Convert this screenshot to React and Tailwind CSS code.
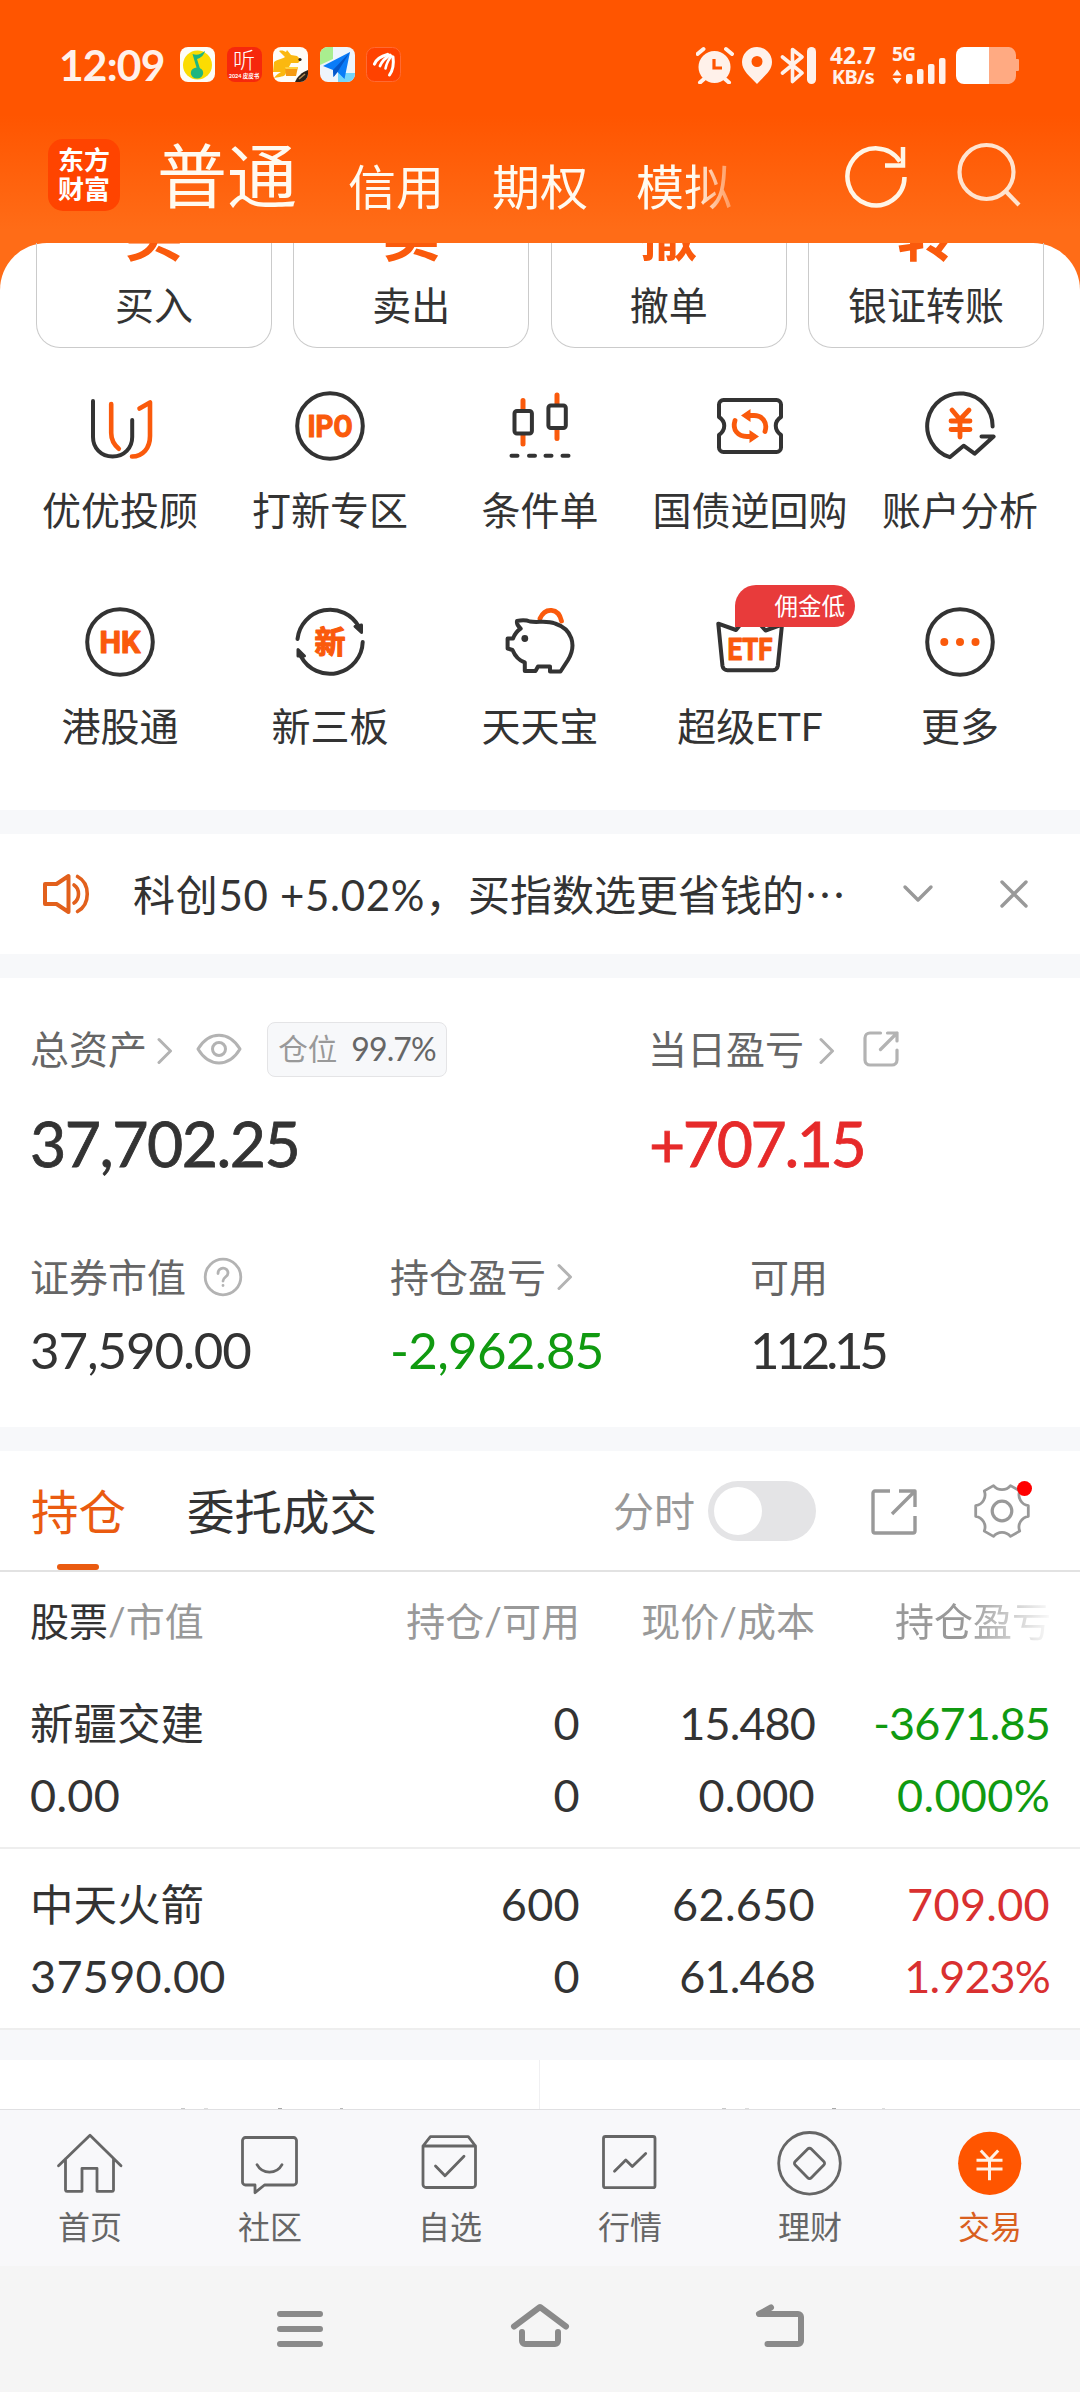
import clsx from 'clsx'

const DARK = '#333333'
const ORANGE = '#fa5a0c'
const FONT = "font-['Lato','Noto_Sans_CJK_SC',sans-serif]"

// ─── Shared bits ───

function Icon({ size = 72, stroke = DARK, width = 4, className, children }) {
  return (
    <svg
      width={size}
      height={size}
      viewBox={`0 0 ${size} ${size}`}
      fill="none"
      stroke={stroke}
      strokeWidth={width}
      strokeLinecap="round"
      strokeLinejoin="round"
      className={clsx('shrink-0', className)}
    >
      {children}
    </svg>
  )
}

function IconText({ x = 36, y = 47, length, size = 31, children }) {
  return (
    <text
      x={x}
      y={y}
      textAnchor="middle"
      textLength={length}
      lengthAdjust="spacingAndGlyphs"
      fontSize={size}
      fill={ORANGE}
      stroke={ORANGE}
      strokeWidth="1.200"
      className="font-['Roboto','Noto_Sans_CJK_SC',sans-serif] font-bold"
    >
      {children}
    </text>
  )
}

function Chevron({ className }) {
  return (
    <svg width="16" height="28" viewBox="0 0 16 28" fill="none" stroke="#b3b3b3" strokeWidth="3" strokeLinecap="round" strokeLinejoin="round" className={clsx('shrink-0', className)}>
      <path d="M2 2.5 13.5 14 2 25.5" />
    </svg>
  )
}

// ─── Status bar ───

function AppBadges() {
  return (
    <div className="flex gap-[11.5px] ml-[18px]">
      <svg width="35" height="35" viewBox="0 0 35 35">
        <rect width="35" height="35" rx="8" fill="#fdfdf8" />
        <circle cx="17.5" cy="18" r="14.5" fill="#fbdc02" />
        <path d="M12.500 7c5 2 8 0 12.500-3-1 4-4 7-8 8l4 13-3.500-1-5-17z" fill="#1fb67f" />
        <ellipse cx="17" cy="26" rx="6.2" ry="5.5" fill="#1fb67f" />
      </svg>
      <div className="w-[35px] h-[35px] rounded-lg bg-[#f6280c] text-white flex flex-col items-center">
        <span className="text-[22px] leading-[25px] font-light">听</span>
        <span className="text-[5.500px] leading-[8px] font-bold whitespace-nowrap">2024 皮皮书</span>
      </div>
      <svg width="35" height="35" viewBox="0 0 35 35">
        <rect width="35" height="35" rx="8" fill="#fffdf8" />
        <path d="M1 15c4-3 8-3 11-5L6 4c3-1 5 0 7 1l1-2 4 5 6 1 4 4-3 3-7 0-2 4-4 8c-2 2-8 2-11 3 2-3 5-5 7-6H0z" fill="#fbb80f" />
        <path d="M12 20h13l-2 9H13z" fill="#f59a12" />
        <path d="M12 20h13l-.500 2h-12z" fill="#ffd23c" />
        <circle cx="27" cy="12.500" r="1.600" fill="#2b2118" />
        <path d="M35 23v4a8 8 0 0 1-8 8h-5c2-5 7-10 13-12z" fill="#2b2118" />
        <path d="m26 32 6-5" stroke="#b58b52" strokeWidth="1.600" />
      </svg>
      <svg width="35" height="35" viewBox="0 0 35 35">
        <rect width="35" height="35" rx="8" fill="#eef5fb" />
        <path d="M8 0h5v12L0 18V8a8 8 0 0 1 8-8z" fill="#a9ee8f" />
        <path d="M18 26h17v1a8 8 0 0 1-8 8h-9z" fill="#74d5fa" />
        <path d="M30 5 3 19l10 4 .5 7 4-5 7 7z" fill="#0a7cf8" />
        <path d="m30 5-17 18 .5 7 4-5z" fill="#0457c9" />
      </svg>
      <svg width="35" height="35" viewBox="0 0 35 35">
        <rect x=".5" y=".5" width="34" height="34" rx="8" fill="#ff4200" stroke="#ff6a33" />
        <g fill="none" stroke="#fff" strokeLinecap="round">
          <path d="M8.500 17c2-5 7-8 13-9.500" strokeWidth="3.200" />
          <path d="M14 19c2-5 5-8 10-11" strokeWidth="2.800" />
          <path d="M19.500 21.500c1-5 3-9 6-12.500" strokeWidth="2.600" />
          <path d="M23.500 28c3.500-5 4.500-11 3.500-18" strokeWidth="3" />
        </g>
      </svg>
    </div>
  )
}

function StatusBar() {
  return (
    <div className="h-[124px] pt-[47px] pl-[59px] pr-[60px] flex items-start text-[#fff1ea]">
      <span className="w-[103px] text-[42.5px] leading-[36px] font-bold tracking-[-0.8px]">12:09</span>
      <AppBadges />
      <div className="ml-auto flex items-start">
        {/* Alarm */}
        <svg width="38" height="38" viewBox="0 0 38 38" className="mt-[-1px]">
          <circle cx="18.500" cy="21" r="16" fill="#fff1ea" />
          <path d="M1.500 8 7.500 3M30 3l6 5M8 33l-4 3.500M29 33l4 3.500" stroke="#fff1ea" strokeWidth="4" strokeLinecap="round" />
          <path d="M18 13v9h8" fill="none" stroke="#ff5500" strokeWidth="3.200" />
        </svg>
        {/* Location */}
        <svg width="30" height="37" viewBox="0 0 30 37" className="ml-[8px]">
          <path fillRule="evenodd" d="M15 0a15 15 0 0 1 15 15c0 9-8 14-15 22C8 29 0 24 0 15A15 15 0 0 1 15 0zm0 9a5.500 5.500 0 1 0 0 11 5.500 5.500 0 0 0 0-11z" fill="#fff1ea" />
        </svg>
        {/* Bluetooth */}
        <svg width="36" height="37" viewBox="0 0 36 37" fill="none" stroke="#fff1ea" strokeWidth="3.600" strokeLinecap="round" strokeLinejoin="round" className="ml-[8px]">
          <path d="M2.500 10 22 26l-9.500 8.500v-32L22 10 2.500 26" />
          <path d="M31.500 4.500v28" strokeWidth="9" />
        </svg>
        <div className="ml-[15px] w-[44px] font-['Noto_Sans',sans-serif] font-bold flex flex-col items-center">
          <span className="text-[22.500px] leading-[17px] tracking-[0.3px]">42.7</span>
          <span className="mt-1 text-[20px] leading-[18px] tracking-[-0.6px]">KB/s</span>
        </div>
        <div className="relative ml-[17px] w-[55px] h-[37px]">
          <span className="absolute left-0 top-[-2px] font-['Noto_Sans',sans-serif] text-[19px] leading-[18px] font-bold tracking-[-0.5px]">5G</span>
          <svg width="55" height="37" viewBox="0 0 55 37" fill="#fff1ea">
            <path d="m5 22.500 4.500 6h-9zM5 37l4.500-6h-9z" />
            <rect x="14" y="27" width="6.500" height="10" rx="2" />
            <rect x="25" y="22" width="6.500" height="15" rx="2" />
            <rect x="36" y="17" width="6.500" height="20" rx="2" />
            <rect x="47" y="11" width="6.500" height="26" rx="2" />
          </svg>
        </div>
        <svg width="64" height="37" viewBox="0 0 64 37" className="ml-[9px]">
          <path d="M33 0h20a8 8 0 0 1 7 8v4h2a1 1 0 0 1 1 1v10a1 1 0 0 1-1 1h-2v5a8 8 0 0 1-7 8H33z" fill="#ffaa82" />
          <path d="M8 0h25v37H8a8 8 0 0 1-8-8V8a8 8 0 0 1 8-8z" fill="#fff" />
        </svg>
      </div>
    </div>
  )
}

// ─── Header ───

function Header() {
  return (
    <div className="h-[119px] pl-[48px] pr-[59px] flex items-start text-[#fffaf0]">
      <div className="mt-[15px] w-[72px] h-[72px] rounded-[15px] bg-[#ff4400] text-white text-[26px] leading-[29px] font-bold flex flex-col items-center justify-center">
        <span>东方</span>
        <span>财富</span>
      </div>
      <span className="ml-[37px] mt-[12px] w-[154px] text-[70px] leading-[80px] whitespace-nowrap">普通</span>
      <div className="mt-[36px] w-[450px] flex gap-[48px] pl-[37px] text-[48px] leading-[54px] whitespace-nowrap [mask-image:linear-gradient(to_right,#000_382px,transparent_440px)]">
        <span>信用</span>
        <span>期权</span>
        <span>模拟</span>
      </div>
      <svg width="66" height="66" viewBox="0 0 66 66" fill="none" stroke="#fff5e6" strokeWidth="4.500" className="ml-auto mt-[19px]">
        <path d="M61.500 34A28.500 28.500 0 1 1 57 18.500" />
        <path d="M60 4v18.500H42" />
      </svg>
      <svg width="64" height="66" viewBox="0 0 64 66" fill="none" stroke="#ffe3cf" strokeWidth="4.200" className="ml-[48px] mt-[17px]">
        <circle cx="29.500" cy="31" r="27" />
        <path d="M47.500 49 62 64" />
      </svg>
    </div>
  )
}

// ─── Shortcuts ───

const ACTIONS = [
  { glyph: '买', label: '买入' },
  { glyph: '卖', label: '卖出' },
  { glyph: '撤', label: '撤单' },
  { glyph: '转', label: '银证转账' },
]

const SHORTCUTS = [
  {
    label: '优优投顾',
    icon: (
      <>
        <path d="M9 11v36c0 11 8 19.500 19.600 19.500S48.200 58 48.200 47V30" />
        <path d="M27.200 14v29c0 7 2 11 7.600 15.700" stroke={ORANGE} strokeWidth="4.600" />
        <path d="M55.500 18.500 66 12.500V46c0 12-7 20.500-18 20.500" stroke={ORANGE} strokeWidth="4.600" />
      </>
    ),
  },
  {
    label: '打新专区',
    icon: (
      <>
        <circle cx="36" cy="36" r="32.800" />
        <IconText length="45">IPO</IconText>
      </>
    ),
  },
  {
    label: '条件单',
    icon: (
      <>
        <path d="M19 10.500V54M53 5v43.500" stroke={ORANGE} strokeWidth="5" />
        <rect x="10.500" y="21" width="17.400" height="22.500" rx="2.500" fill="#fff" />
        <rect x="44.400" y="15.500" width="17.400" height="22.500" rx="2.500" fill="#fff" />
        <path d="M7.500 65.700h6M25 65.700h6M41.500 65.700h6M58.500 65.700h6" />
      </>
    ),
  },
  {
    label: '国债逆回购',
    icon: (
      <>
        <path d="M5 14.500a4.500 4.500 0 0 1 4.500-4.500h53a4.500 4.500 0 0 1 4.500 4.500V27c-7 4.500-7 13 0 18v12.500a4.500 4.500 0 0 1-4.500 4.500h-53A4.500 4.500 0 0 1 5 57.500V45c7-5 7-13.500 0-18z" />
        <g stroke={ORANGE} strokeWidth="4.800">
          <path d="M21 30.500C18 40 24 46.500 33 46.500h4" />
          <path d="M51 41.500C54 32 48 25.500 40 25.500h-5" />
        </g>
        <path d="m45 46.500-9.500 6.500V40zM27 25.500l9.500-6.500v13z" fill={ORANGE} stroke="none" />
      </>
    ),
  },
  {
    label: '账户分析',
    icon: (
      <>
        <path d="M68.600 36.500A32.700 32.700 0 1 0 25.800 67.200L39.600 55.700l11 8 19-17.200H57.500" />
        <path d="m28 20 8 9.500 9-9.500M36 29.500v17.500M27 31h19M27 39.500h19" stroke={ORANGE} strokeWidth="4.800" />
      </>
    ),
  },
  {
    label: '港股通',
    icon: (
      <>
        <circle cx="36" cy="36" r="32.800" />
        <IconText length="41">HK</IconText>
      </>
    ),
  },
  {
    label: '新三板',
    icon: (
      <>
        <path d="M3.500 33A32.800 32.800 0 0 1 65 21M68.700 36A32.800 32.800 0 0 1 7 50.500" />
        <path d="m61 20.500 6.500-1.500v7.500zM4 43.500l6.500 6.500H4z" fill={DARK} strokeWidth="3" />
        <IconText y={47} size={31}>新</IconText>
      </>
    ),
  },
  {
    label: '天天宝',
    icon: (
      <>
        <path d="M36 12.500C41 1 54.500 1.500 57.500 15" stroke={ORANGE} strokeWidth="4.800" />
        <path d="M13 15c5-1 9-1 13 .500 8 1.500 16-1.500 25 2C68 23 73 39 64 54l-7.500 11.500H46v-5H34L31.500 65H20.800v-8.500C15 54.500 11 50 8.500 44L3.600 42.500v-10H9c1.500-4 4-7.500 7.700-10C13.500 20 12.500 18 13 15z" fill="#fff" />
        <circle cx="20.800" cy="32.500" r="3.400" fill={DARK} stroke="none" />
      </>
    ),
  },
  {
    label: '超级ETF',
    tag: '佣金低',
    icon: (
      <>
        <path d="M4.300 17.700 22 24l8-10h12l9.500 10.500 16.500-6L63.800 60a5 5 0 0 1-5 4.200H13.500A5 5 0 0 1 8.500 60z" />
        <IconText y={53.500} length="45">ETF</IconText>
      </>
    ),
  },
  {
    label: '更多',
    icon: (
      <>
        <circle cx="36" cy="36" r="32.800" />
        <g fill={ORANGE} stroke="none">
          <circle cx="20.300" cy="36" r="4" />
          <circle cx="36" cy="36" r="4" />
          <circle cx="51.500" cy="36" r="4" />
        </g>
      </>
    ),
  },
]

function QuickActions() {
  return (
    <div className="h-[105px] px-[36px] grid grid-cols-4 gap-[21.300px]">
      {ACTIONS.map((a) => (
        <div key={a.label} className="h-[105px] overflow-hidden rounded-b-[24px] border border-t-0 border-[#cbcbcb] flex flex-col items-center">
          <span className="mt-[-40px] h-[62px] text-[58px] leading-[62px] font-bold text-[#fa5a0c]">{a.glyph}</span>
          <span className="mt-[16px] text-[39px] leading-[48px] text-[#333]">{a.label}</span>
        </div>
      ))}
    </div>
  )
}

function Shortcuts() {
  return (
    <div className="h-[462px] pt-[42px] px-[15px] grid grid-cols-5 auto-rows-[216px]">
      {SHORTCUTS.map((s) => (
        <div key={s.label} className="relative flex flex-col items-center">
          <Icon>{s.icon}</Icon>
          {s.tag && (
            <span className="absolute left-[90px] top-[-21px] w-[120px] h-[42px] pr-[10px] rounded-[21px] rounded-bl-none bg-[#e83b3b] text-white text-[23.500px] leading-[42px] text-right">
              {s.tag}
            </span>
          )}
          <span className="mt-[24px] text-[39px] leading-[48px] text-[#333] whitespace-nowrap">{s.label}</span>
        </div>
      ))}
    </div>
  )
}

// ─── Notice ───

function Notice() {
  return (
    <div className="h-[120px] flex items-center">
      <svg width="50" height="44" viewBox="0 0 50 44" fill="none" stroke="#e2601c" strokeWidth="4" strokeLinecap="round" strokeLinejoin="round" className="ml-[41px]">
        <path d="M4 12h11.500L27.500 4v36l-12-8H4z" />
        <path d="M33 13c6 4 6 14 0 18M36.500 4.500c13 7 13 28 0 35" strokeWidth="3.600" />
      </svg>
      <div className="ml-[42px] text-[42px] leading-[54px] text-[#333] whitespace-nowrap">
        <span className="tracking-[0.7px]">科创50 +5.02%，</span>
        买指数选更省钱的
        <span className="font-['Noto_Sans_CJK_SC']">⋯</span>
      </div>
      <svg width="32" height="20" viewBox="0 0 32 20" fill="none" stroke="#999" strokeWidth="3.400" strokeLinecap="round" strokeLinejoin="round" className="ml-auto">
        <path d="m3 3 13 13L29 3" />
      </svg>
      <svg width="30" height="30" viewBox="0 0 30 30" fill="none" stroke="#999" strokeWidth="3.400" strokeLinecap="round" className="ml-[65px] mr-[51px]">
        <path d="m3 3 24 24M27 3 3 27" />
      </svg>
    </div>
  )
}

// ─── Assets ───

function Assets() {
  return (
    <div className="h-[449px] px-[30px] pt-[44px] text-[39px] text-[#666]">
      <div className="flex h-[54px] items-center">
        <div className="w-[618px] flex items-center">
          <span>总资产</span>
          <Chevron className="ml-[10px] mt-[3px]" />
          <Icon size={46} stroke="#b3b3b3" width={3} className="ml-[23px]">
            <path d="M2 23C13 4.500 33 4.500 44 23 33 41.500 13 41.500 2 23z" />
            <circle cx="23" cy="23" r="6.500" />
          </Icon>
          <span className="ml-[25px] w-[180px] h-[55px] rounded-lg border border-[#e4e4e6] bg-[#f7f8fa] flex items-center justify-center text-[29.500px] text-[#999]">
            仓位
            <span className="ml-[14px] text-[32px] tracking-[-0.9px] text-[#666]">99.7%</span>
          </span>
        </div>
        <span>当日盈亏</span>
        <Chevron className="ml-[15px] mt-[3px]" />
        <Icon size={36} stroke="#b3b3b3" width={3.2} className="ml-[28px]">
          <path d="M17.500 2H7a5 5 0 0 0-5 5v22a5 5 0 0 0 5 5h22a5 5 0 0 0 5-5V19" />
          <path d="M24.500 2H34v8M34 2 17.500 18.500" />
        </Icon>
      </div>
      <div className="flex mt-[29px] h-[76px] text-[62.500px] leading-[76px] tracking-[-1.5px] [-webkit-text-stroke:0.8px_currentColor]">
        <span className="w-[619px] text-[#333]">37,702.25</span>
        <span className="text-[#e62a2a] tracking-[-2.400px]">+707.15</span>
      </div>
      <div className="grid grid-cols-[360px_360px_1fr] mt-[69px] leading-[54px]">
        <div className="flex items-center">
          证券市值
          <svg width="40" height="40" viewBox="0 0 40 40" fill="none" stroke="#b3b3b3" strokeWidth="2.800" strokeLinecap="round" className="ml-[17px]">
            <circle cx="20" cy="20" r="17.800" />
            <path d="M15 16.500c0-7 10-7 10-.5 0 4-5 4-5 8M20 28.300v.2" />
          </svg>
        </div>
        <div className="flex items-center">
          持仓盈亏
          <Chevron className="ml-[11px]" />
        </div>
        <span>可用</span>
      </div>
      <div className="grid grid-cols-[360px_360px_1fr] mt-[15px] text-[51px] leading-[62px] tracking-[-1.1px] text-[#333]">
        <span>37,590.00</span>
        <span className="tracking-[-0.700px] text-[#109a10]">-2,962.85</span>
        <span className="tracking-[-4.200px]">112.15</span>
      </div>
    </div>
  )
}

// ─── Positions ───

function PositionTabs() {
  return (
    <div className="h-[121px] border-b-2 border-[#e2e2e2] pl-[31px] pr-[48px] flex items-center text-[47.500px] text-[#333]">
      <div className="relative h-full flex items-center text-[#ea5b10]">
        <span className="mt-[2px]">持仓</span>
        <span className="absolute left-[26px] bottom-0 w-[42px] h-[6px] rounded-full bg-[#ea5b10]" />
      </div>
      <span className="ml-[61px] mt-[2px]">委托成交</span>
      <span className="ml-auto mt-[2px] text-[41px] text-[#999]">分时</span>
      <div className="ml-[13px] w-[108px] h-[60px] rounded-full bg-[#e4e4e6] p-[6px]">
        <div className="w-[48px] h-[48px] rounded-full bg-white" />
      </div>
      <svg width="48" height="48" viewBox="0 0 48 48" fill="none" stroke="#999" strokeWidth="3.400" strokeLinejoin="round" className="ml-[54px]">
        <path d="M20 4H5a2 2 0 0 0-2 2v38a2 2 0 0 0 2 2h38a2 2 0 0 0 2-2V29" />
        <path d="M29 4h16v16M45 4 22 27" />
      </svg>
      <div className="relative ml-[54px]">
        <svg width="60" height="60" viewBox="0 0 60 60" fill="none" stroke="#999" strokeWidth="2.800" strokeLinejoin="round">
          <path d="M56.300 24.700v10.600A11 11 0 0 0 47.700 50.100L38.500 55.400A11 11 0 0 0 21.500 55.400L12.300 50.100A11 11 0 0 0 3.700 35.300V24.700A11 11 0 0 0 12.300 9.900L21.500 4.600A11 11 0 0 0 38.500 4.600L47.700 9.900A11 11 0 0 0 56.300 24.700z" />
          <circle cx="30" cy="30" r="9.800" strokeWidth="3.200" />
        </svg>
        <span className="absolute left-[45px] top-0 w-[15px] h-[15px] rounded-full bg-[#ff0000]" />
      </div>
    </div>
  )
}

const POSITIONS = [
  { name: '新疆交建', value: '0.00', held: '0', usable: '0', price: '15.480', cost: '0.000', pnl: '-3671.85', rate: '0.000%', up: false },
  { name: '中天火箭', value: '37590.00', held: '600', usable: '0', price: '62.650', cost: '61.468', pnl: '709.00', rate: '1.923%', up: true },
]

const COLS = 'grid grid-cols-[312px_238px_235px_235px] px-[30px]'

// The digit 1 sits tighter than the other figures.
const spacing = (v) => (v.includes('1') ? 'tracking-[-0.9px]' : 'tracking-[0.3px]')

function Positions() {
  return (
    <div className="h-[458px]">
      <div className={clsx(COLS, 'h-[96px] pt-[22px] text-[39px] leading-[54px] text-[#999] whitespace-nowrap')}>
        <span><span className="text-[#333]">股票</span>/市值</span>
        <span className="text-right">持仓/可用</span>
        <span className="text-right">现价/成本</span>
        <span className="pl-[80px] [mask-image:linear-gradient(to_right,#000_150px,transparent_240px)]">持仓盈亏</span>
      </div>
      {POSITIONS.map((p) => (
        <div key={p.name} className={clsx(COLS, 'h-[181px] pt-[19px] auto-rows-[72px] border-b-2 border-[#eeeeee] text-[45px] leading-[72px] text-[#333] text-right')}>
          <span className="text-left text-[43.500px]">{p.name}</span>
          <span className={spacing(p.held)}>{p.held}</span>
          <span className={spacing(p.price)}>{p.price}</span>
          <span className={clsx(spacing(p.pnl), p.up ? 'text-[#d93030]' : 'text-[#109a10]')}>{p.pnl}</span>
          <span className={clsx('text-left', spacing(p.value))}>{p.value}</span>
          <span className={spacing(p.usable)}>{p.usable}</span>
          <span className={spacing(p.cost)}>{p.cost}</span>
          <span className={clsx(spacing(p.rate), p.up ? 'text-[#d93030]' : 'text-[#109a10]')}>{p.rate}</span>
        </div>
      ))}
    </div>
  )
}

// Next card row, scrolled mostly under the tab bar.
function NextCards() {
  return (
    <div className="h-[49px] grid grid-cols-2">
      <div className="border-r border-[#f0f0f2] flex items-end pl-[181px]">
        <span className="w-1 h-px bg-[#c8c8c8]" />
        <span className="ml-[19px] w-1 h-px bg-[#dcdcdc]" />
        <span className="ml-[70px] w-1 h-px bg-[#a8a8a8]" />
        <span className="ml-[58px] w-[3px] h-px bg-[#b8b8b8]" />
      </div>
      <div className="flex items-end pl-[182px]">
        <span className="w-1 h-px bg-[#c8c8c8]" />
        <span className="ml-[19px] w-1 h-px bg-[#dcdcdc]" />
        <span className="ml-[83px] w-1 h-px bg-[#a8a8a8]" />
        <span className="ml-[46px] w-[3px] h-px bg-[#dcdcdc]" />
      </div>
    </div>
  )
}

// ─── Bottom navigation ───

const NAV = [
  {
    label: '首页',
    icon: <path d="M4.500 38.700 36 8.300l31 30.400M11.500 32v31a1.500 1.500 0 0 0 1.500 1.300h15V41.300h15v23h15a1.500 1.500 0 0 0 1.500-1.300V32" />,
  },
  {
    label: '社区',
    icon: (
      <>
        <path d="M11.500 10.500h48a3 3 0 0 1 3 3V55a3 3 0 0 1-3 3h-29l-9.500 7.700V58h-9.500a3 3 0 0 1-3-3V13.500a3 3 0 0 1 3-3z" />
        <path d="M23 37.700c5.500 10 19.500 10 25 0" />
      </>
    ),
  },
  {
    label: '自选',
    icon: (
      <>
        <path d="M9 19v38.500a3 3 0 0 0 3 3h46.500a3 3 0 0 0 3-3V19M9 19h52.500L54.300 9.700H16.400z" />
        <path d="m21.500 39 9.500 9.700 19-19.500" />
      </>
    ),
  },
  {
    label: '行情',
    icon: (
      <>
        <rect x="9.500" y="9.500" width="51.500" height="51.200" rx="2" />
        <path d="m20.500 44.300 11.300-11.300 6.500 6.500 13.400-13" />
      </>
    ),
  },
  {
    label: '理财',
    icon: (
      <>
        <circle cx="35.500" cy="36.300" r="30.800" />
        <path d="m33.700 22-12.500 12.500a2.500 2.500 0 0 0 0 3.600l12.500 12.700a2.500 2.500 0 0 0 3.600 0l12.500-12.700a2.500 2.500 0 0 0 0-3.600L37.300 22a2.500 2.500 0 0 0-3.600 0z" />
      </>
    ),
  },
  {
    label: '交易',
    active: true,
    icon: (
      <>
        <circle cx="35.700" cy="36.300" r="31.600" fill="#ff5500" stroke="none" />
        <path d="m26.800 23.500 8.700 9.300 8.700-9.300M35.500 32.800v20.500M22.500 33.300h26M22.500 42h26" stroke="#fff1e6" strokeWidth="3" strokeLinecap="butt" />
      </>
    ),
  },
]

function BottomNav() {
  return (
    <div className="h-[157px] border-t border-[#e0e0e2] bg-[#f8f8fa] grid grid-cols-6 pt-[17px]">
      {NAV.map((n) => (
        <div key={n.label} className={clsx('flex flex-col items-center text-[32px] leading-[40px]', n.active ? 'text-[#d9601f]' : 'text-[#666]')}>
          <Icon stroke="#666" width={2.8}>{n.icon}</Icon>
          <span className="mt-[8px]">{n.label}</span>
        </div>
      ))}
    </div>
  )
}

function SystemBar() {
  return (
    <div className="h-[126px] bg-[#f5f5f5] px-[180px] grid grid-cols-3 justify-items-center items-center">
      <Icon size={60} stroke="#8a8a8a" width={6}>
        <path d="M10 15h40M10 30h40M10 45h40" />
      </Icon>
      <Icon size={60} stroke="#8a8a8a" width={6}>
        <path d="M4 27.500 30 8l26 19.500M12 33v9a3 3 0 0 0 3 3h30a3 3 0 0 0 3-3v-9" />
      </Icon>
      <Icon size={60} stroke="#8a8a8a" width={6}>
        <path d="M21 8.500 9 15h39a3 3 0 0 1 3 3v24a3 3 0 0 1-3 3H17.500" />
      </Icon>
    </div>
  )
}

export default function App() {
  return (
    <div className={clsx(FONT, 'w-[1080px] h-[2392px] overflow-hidden bg-white')}>
      <div className="h-[810px] bg-[linear-gradient(to_bottom,#ff5500_0px,#ff5500_115px,#ff6c17_230px,#ff6c17_300px)]">
        <StatusBar />
        <Header />
        <div className="h-[567px] rounded-t-[47px] bg-white">
          <QuickActions />
          <Shortcuts />
        </div>
      </div>
      <div className="border-y-[24px] border-[#f7f8fa]">
        <Notice />
      </div>
      <Assets />
      <div className="h-[24px] bg-[#f7f8fa]" />
      <PositionTabs />
      <Positions />
      <div className="h-[30px] bg-[#f7f8fa]" />
      <NextCards />
      <BottomNav />
      <SystemBar />
    </div>
  )
}
